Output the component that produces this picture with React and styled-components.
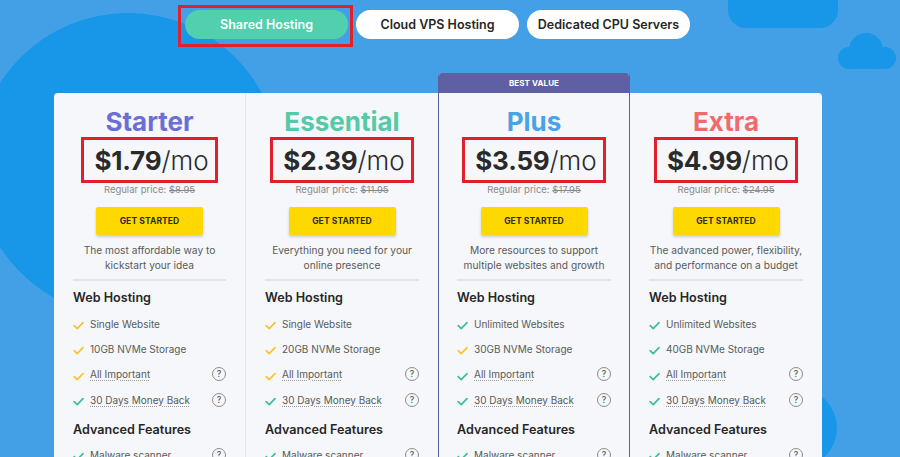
import React from 'react';
import styled, { createGlobalStyle } from 'styled-components';

const Global = createGlobalStyle`
  html, body { margin: 0; padding: 0; }
  body {
    background: #43a0e7;
    font-family: Inter, "Open Sans", "Liberation Sans", sans-serif;
    overflow: hidden;
  }
`;

const Page = styled.div`
  position: relative;
  width: 900px;
  height: 457px;
  overflow: hidden;
`;

const Backdrop = styled.svg`
  position: absolute;
  left: 0;
  top: 0;
  z-index: 0;
`;

const Content = styled.div`
  position: relative;
  z-index: 1;
  padding: 10px 0 0 54px;
`;

const Tabs = styled.nav`
  display: flex;
  gap: 8px;
  margin-left: 131px;
`;

const Tab = styled.button`
  position: relative;
  width: 163px;
  height: 29px;
  border: 0;
  border-radius: 15px;
  padding: 0;
  font-family: inherit;
  font-size: 12.5px;
  font-weight: 600;
  color: ${(p) => (p.$active ? '#ffffff' : '#262626')};
  background: ${(p) => (p.$active ? '#52cfac' : '#ffffff')};
  cursor: pointer;
  ${(p) =>
    p.$active &&
    `
    &::after {
      content: '';
      position: absolute;
      left: -7px; right: -5px; top: -5px; bottom: -8px;
      border: 3px solid #e0212b;
    }
  `}
`;

const Plans = styled.div`
  display: grid;
  grid-template-columns: repeat(4, 192px);
  margin-top: 34px;
  width: 768px;
  align-items: start;
`;

const Card = styled.section`
  margin-top: ${(p) => (p.$featured ? '0' : '20px')};
  background: #f5f7fb;
  border-right: ${(p) => (p.$separator ? '1px solid #e2e5ed' : '0')};
  border-top-left-radius: ${(p) => (p.$first ? '4px' : '0')};
  border-top-right-radius: ${(p) => (p.$last ? '4px' : '0')};
  ${(p) =>
    p.$featured &&
    `
    border: 1px solid #5b5d9f;
    border-top: 0;
    border-radius: 4px 4px 0 0;
    overflow: hidden;
  `}
  height: 460px;
`;

const Ribbon = styled.div`
  height: 20px;
  background: #5f60a3;
  color: #fff;
  font-size: 8px;
  font-weight: 700;
  letter-spacing: 0.1px;
  display: flex;
  align-items: center;
  justify-content: center;
`;

const Body = styled.div`
  display: flex;
  flex-direction: column;
  padding: 13px ${(p) => (p.$featured ? '18px' : '19px')} 0;
`;

const Head = styled.div`
  display: flex;
  flex-direction: column;
  align-items: center;
`;

const Title = styled.h2`
  margin: 0;
  font-size: 26px;
  line-height: 31px;
  font-weight: 700;
  color: ${(p) => p.$color};
`;

const Price = styled.div`
  display: flex;
  align-items: center;
  height: 40px;
  padding: 0 6px 0 10px;
  border: 3px solid #e0212b;
  font-size: 26px;
  color: #2a2a2a;
`;

const Amount = styled.strong`
  font-weight: 700;
  letter-spacing: -0.2px;
`;

const Per = styled.span`
  font-weight: 300;
`;

const Regular = styled.div`
  margin-top: 1px;
  font-size: 9.5px;
  line-height: 12px;
  color: #8a8a8a;
  s { text-decoration-thickness: 1px; }
`;

const Cta = styled.button`
  margin-top: 11px;
  width: 107px;
  height: 28px;
  border: 0;
  border-radius: 2px;
  background: #ffd800;
  box-shadow: 0 2px 3px rgba(0, 0, 0, 0.18);
  font-family: inherit;
  font-size: 8.5px;
  font-weight: 700;
  color: #2b2b2b;
  letter-spacing: 0.1px;
`;

const Blurb = styled.p`
  margin: 8px 0 0;
  font-size: 10.2px;
  line-height: 15px;
  color: #595959;
  text-align: center;
`;

const Divider = styled.hr`
  margin: 6px 0 0;
  height: 2px;
  border: 0;
  background: #e1e4eb;
  width: 100%;
`;

const Group = styled.h3`
  margin: ${(p) => p.$mt} 0 0;
  font-size: 12.6px;
  line-height: 16px;
  font-weight: 600;
  color: #262626;
`;

const List = styled.ul`
  list-style: none;
  margin: ${(p) => p.$mt} 0 0;
  padding: 0;
`;

const Row = styled.li`
  display: flex;
  align-items: center;
  height: 25.3px;
  font-size: 10px;
  color: #5a5a5a;
`;

const Check = styled.svg`
  width: 11px;
  height: 9px;
  margin: 4px 6px 0 0;
  flex: none;
`;

const Label = styled.span`
  flex: 1;
  span {
    text-decoration: underline dotted #9a9a9a;
    text-underline-offset: 2px;
  }
`;

const Help = styled.span`
  width: 12px;
  height: 12px;
  border: 1px solid #8c8c8c;
  border-radius: 50%;
  display: flex;
  align-items: center;
  justify-content: center;
  font-size: 8.5px;
  font-weight: 500;
  color: #555;
  flex: none;
`;

const Y = '#f5c52d';
const G = '#3dbf95';

const Tick = ({ color }) => (
  <Check viewBox="0 0 11 9">
    <polyline points="1.2,4.6 4.2,7.6 10,1.6" fill="none" stroke={color} strokeWidth="1.7" strokeLinecap="round" strokeLinejoin="round" />
  </Check>
);

const plans = [
  {
    name: 'Starter', color: '#6b6fd4', price: '$1.79', regular: '$8.95',
    blurb: ['The most affordable way to', 'kickstart your idea'],
    feats: [['Single Website', Y], ['10GB NVMe Storage', Y], ['All Important', Y, true], ['30 Days Money Back', G, true]],
  },
  {
    name: 'Essential', color: '#54caa6', price: '$2.39', regular: '$11.95',
    blurb: ['Everything you need for your', 'online presence'],
    feats: [['Single Website', Y], ['20GB NVMe Storage', Y], ['All Important', Y, true], ['30 Days Money Back', G, true]],
  },
  {
    name: 'Plus', color: '#4aa3e4', price: '$3.59', regular: '$17.95', featured: true,
    blurb: ['More resources to support', 'multiple websites and growth'],
    feats: [['Unlimited Websites', G], ['30GB NVMe Storage', Y], ['All Important', G, true], ['30 Days Money Back', G, true]],
  },
  {
    name: 'Extra', color: '#f06b6b', price: '$4.99', regular: '$24.95',
    blurb: ['The advanced power, flexibility,', 'and performance on a budget'],
    feats: [['Unlimited Websites', G], ['40GB NVMe Storage', G], ['All Important', G, true], ['30 Days Money Back', G, true]],
  },
];

const Feature = ({ text, color, help }) => (
  <Row>
    <Tick color={color} />
    <Label>{help ? <span>{text}</span> : text}</Label>
    {help && <Help>?</Help>}
  </Row>
);

export default function App() {
  return (
    <Page>
      <Global />
      <Backdrop width="900" height="457" viewBox="0 0 900 457">
        <circle cx="128" cy="165" r="152" fill="#1896e8" />
        <circle cx="797" cy="428" r="40" fill="#1896e8" />
        <rect x="728" y="-30" width="110" height="58" rx="18" fill="#1896e8" />
        <g fill="#1896e8">
          <rect x="838" y="47" width="58" height="22" rx="11" />
          <circle cx="866" cy="50" r="17" />
        </g>
      </Backdrop>
      <Content>
        <Tabs>
          <Tab $active>Shared Hosting</Tab>
          <Tab>Cloud VPS Hosting</Tab>
          <Tab>Dedicated CPU Servers</Tab>
        </Tabs>
        <Plans>
          {plans.map((p, i) => (
            <Card key={p.name} $featured={p.featured} $first={i === 0} $last={i === 3} $separator={i === 0}>
              {p.featured && <Ribbon>BEST VALUE</Ribbon>}
              <Body $featured={p.featured}>
                <Head>
                  <Title $color={p.color}>{p.name}</Title>
                  <Price>
                    <Amount>{p.price}</Amount>
                    <Per>/mo</Per>
                  </Price>
                  <Regular>
                    Regular price: <s>{p.regular}</s>
                  </Regular>
                  <Cta>GET STARTED</Cta>
                  <Blurb>
                    {p.blurb[0]}
                    <br />
                    {p.blurb[1]}
                  </Blurb>
                </Head>
                <Divider />
                <Group $mt="9px">Web Hosting</Group>
                <List $mt="5px">
                  {p.feats.map(([t, c, h]) => (
                    <Feature key={t} text={t} color={c} help={h} />
                  ))}
                </List>
                <Group $mt="10px">Advanced Features</Group>
                <List $mt="4px">
                  <Feature text="Malware scanner" color={G} help />
                </List>
              </Body>
            </Card>
          ))}
        </Plans>
      </Content>
    </Page>
  );
}
